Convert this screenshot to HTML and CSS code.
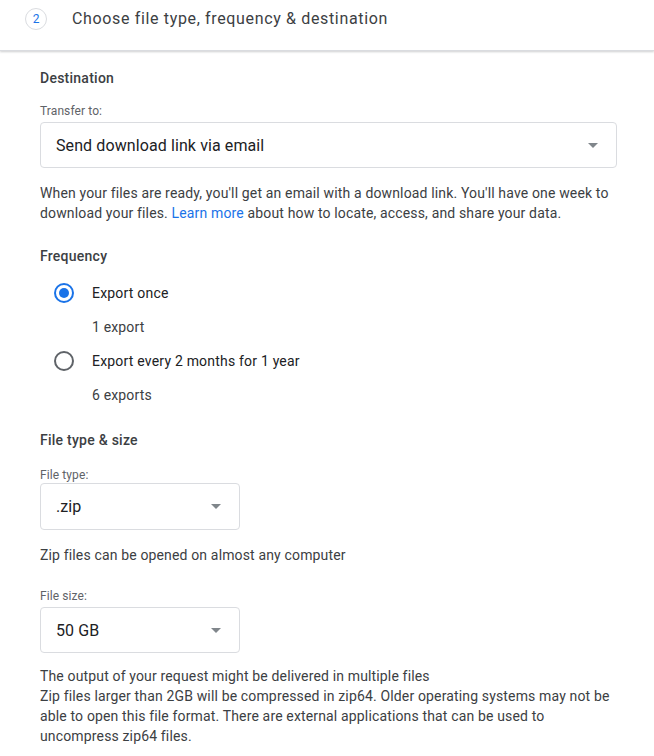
FILE: index.html
```html
<!DOCTYPE html>
<html lang="en">
<head>
<meta charset="utf-8">
<title>Choose file type, frequency &amp; destination</title>
<link rel="stylesheet" href="styles.css">
</head>
<body>
<header class="step-header">
  <span class="step-num">2</span>
  <h1 class="step-title">Choose file type, frequency &amp; destination</h1>
</header>
<main class="content">
  <section class="sec">
    <h2 class="sec-title">Destination</h2>
    <div class="field-label">Transfer to:</div>
    <div class="select select-wide">
      <span class="select-value">Send download link via email</span>
      <span class="caret"></span>
    </div>
    <p class="desc desc-dest">When your files are ready, you'll get an email with a download link. You'll have one week to download your files. <a class="link" href="#">Learn more</a> about how to locate, access, and share your data.</p>
  </section>

  <section class="sec sec-freq">
    <h2 class="sec-title">Frequency</h2>
    <div class="radio-list">
      <div class="radio-row">
        <span class="radio radio-on"></span>
        <span class="radio-label">Export once</span>
      </div>
      <div class="radio-sub">1 export</div>
      <div class="radio-row">
        <span class="radio"></span>
        <span class="radio-label">Export every 2 months for 1 year</span>
      </div>
      <div class="radio-sub">6 exports</div>
    </div>
  </section>

  <section class="sec sec-file">
    <h2 class="sec-title">File type &amp; size</h2>
    <div class="field-label label-type">File type:</div>
    <div class="select select-small">
      <span class="select-value">.zip</span>
      <span class="caret"></span>
    </div>
    <p class="desc desc-zip">Zip files can be opened on almost any computer</p>
    <div class="field-label label-size">File size:</div>
    <div class="select select-small select-size">
      <span class="select-value">50 GB</span>
      <span class="caret"></span>
    </div>
    <p class="desc desc-size">The output of your request might be delivered in multiple files<br>Zip files larger than 2GB will be compressed in zip64. Older operating systems may not be able to open this file format. There are external applications that can be used to uncompress zip64 files.</p>
  </section>
</main>
</body>
</html>
```

FILE: styles.css
```css
* { box-sizing: border-box; }

html, body {
  margin: 0;
  padding: 0;
  background: #ffffff;
}

body {
  font-family: Roboto, "Liberation Sans", Arial, sans-serif;
  color: #3c4043;
  font-size: 14px;
  line-height: 20px;
  letter-spacing: 0.15px;
}

.step-header {
  display: flex;
  align-items: flex-start;
  gap: 25px;
  height: 51px;
  padding: 8px 0 0 25px;
  border-bottom: 1px solid #dadce0;
  box-shadow: 0 1px 2px rgba(60, 64, 67, 0.25);
}

.step-num {
  display: flex;
  align-items: center;
  justify-content: center;
  width: 22px;
  height: 22px;
  border: 1px solid #dadce0;
  border-radius: 50%;
  color: #1a73e8;
  font-size: 12px;
  line-height: 1;
  letter-spacing: 0;
}

.step-title {
  margin: 0;
  font-size: 16px;
  font-weight: 400;
  line-height: 22px;
  color: #3c4043;
  letter-spacing: 0.65px;
}

.content {
  padding: 17px 37px 0 40px;
}

.sec-title {
  margin: 0;
  font-size: 14px;
  font-weight: 500;
  line-height: 20px;
  color: #3c4043;
  letter-spacing: 0.25px;
}

.field-label {
  margin: 15px 0 3px;
  font-size: 12px;
  line-height: 16px;
  color: #5f6368;
  letter-spacing: 0.1px;
}

.label-type {
  margin-top: 17px;
  margin-bottom: 0;
}

.label-size {
  margin-top: 23px;
  margin-bottom: 3px;
}

.select {
  display: flex;
  align-items: center;
  justify-content: space-between;
  height: 46px;
  border: 1px solid #dadce0;
  border-radius: 4px;
  padding: 0 18px 0 15px;
  background: #fff;
}

.select-wide { width: 100%; }

.select-small {
  width: 200px;
  height: 47px;
  padding-right: 18px;
}

.select-size { height: 46px; }

.select-value {
  font-size: 16px;
  color: #202124;
  line-height: 20px;
  letter-spacing: 0.1px;
  padding-top: 1px;
}

.caret {
  width: 0;
  height: 0;
  border-left: 5px solid transparent;
  border-right: 5px solid transparent;
  border-top: 5px solid #80868b;
}

.desc {
  margin: 13px 0 0;
  font-size: 14px;
  line-height: 20px;
  color: #3c4043;
}

.desc-dest { margin-top: 15px; }
.desc-zip { margin-top: 15px; }

.link {
  color: #1a73e8;
  text-decoration: none;
}

.sec-freq { margin-top: 23px; }
.sec-file { margin-top: 25px; }

.radio-list {
  display: flex;
  flex-direction: column;
  gap: 14px;
  margin-top: 17px;
}

.radio-row {
  display: flex;
  align-items: center;
  gap: 18px;
  padding-left: 14px;
  height: 20px;
}

.radio {
  width: 20px;
  height: 20px;
  border: 2px solid #5f6368;
  border-radius: 50%;
  flex: none;
  position: relative;
}

.radio-on {
  border-color: #1a73e8;
}

.radio-on::after {
  content: "";
  position: absolute;
  left: 3px;
  top: 3px;
  width: 10px;
  height: 10px;
  border-radius: 50%;
  background: #1a73e8;
}

.radio-label {
  font-size: 14px;
  color: #202124;
  letter-spacing: 0.2px;
}

.radio-sub {
  padding-left: 52px;
  font-size: 14px;
  line-height: 20px;
  color: #3c4043;
}
```
